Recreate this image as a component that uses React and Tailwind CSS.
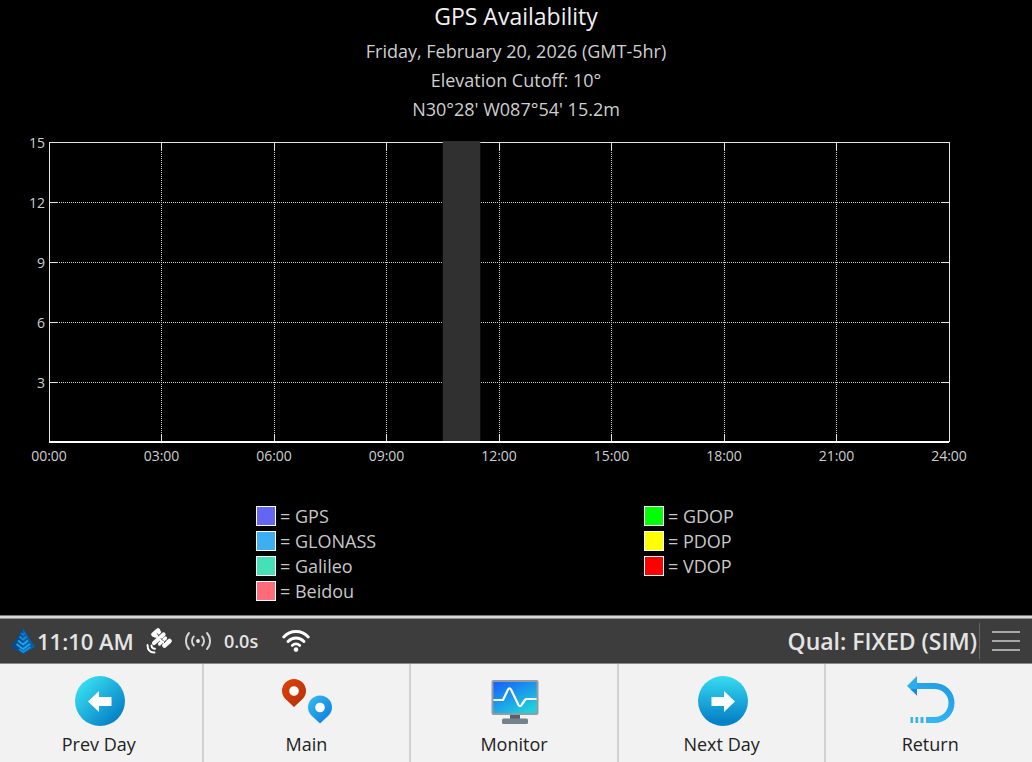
import React, { useState } from 'react';

const DAY_HOURS = 24;
const PLOT_HEIGHT = 300;
const MAX_COUNT = 15;

const HOURS = [0, 3, 6, 9, 12, 15, 18, 21, 24];
const COUNTS = [15, 12, 9, 6, 3];

const CONSTELLATIONS = [
    { label: 'GPS', color: 'bg-[#6366f1]' },
    { label: 'GLONASS', color: 'bg-[#3daeef]' },
    { label: 'Galileo', color: 'bg-[#45e0b5]' },
    { label: 'Beidou', color: 'bg-[#ff6b78]' }
];

const DOPS = [
    { label: 'GDOP', color: 'bg-[#00ff00]' },
    { label: 'PDOP', color: 'bg-[#ffff00]' },
    { label: 'VDOP', color: 'bg-[#ff0000]' }
];

const hourX = (hour) => `${(hour / DAY_HOURS) * 100}%`;
const countY = (count) => PLOT_HEIGHT - (count / MAX_COUNT) * PLOT_HEIGHT;
const hourLabel = (hour) => `${String(hour).padStart(2, '0')}:00`;

const AvailabilityChart = ({ currentHour }) => (
    <svg className="block w-full h-[300px] overflow-visible" role="img" aria-label="GPS Availability">
        {/* Dotted grid */}
        <g stroke="#d4d4d4" strokeWidth="1" strokeDasharray="1 1" shapeRendering="crispEdges">
            {HOURS.slice(1, -1).map((h) => (
                <line key={h} x1={hourX(h)} x2={hourX(h)} y1="0" y2={PLOT_HEIGHT} />
            ))}
            {COUNTS.slice(1).map((c) => (
                <line key={c} x1="0" x2="100%" y1={countY(c)} y2={countY(c)} />
            ))}
        </g>

        {/* Frame */}
        <g stroke="#e5e5e5" strokeWidth="1" shapeRendering="crispEdges">
            <line x1="0" x2="100%" y1="0" y2="0" />
            <line x1="0" x2="0" y1="0" y2={PLOT_HEIGHT} />
            <line x1="100%" x2="100%" y1="0" y2={PLOT_HEIGHT} />
            {HOURS.slice(1, -1).map((h) => (
                <g key={h}>
                    <line x1={hourX(h)} x2={hourX(h)} y1="0" y2="8" />
                    <line x1={hourX(h)} x2={hourX(h)} y1={PLOT_HEIGHT - 8} y2={PLOT_HEIGHT} />
                </g>
            ))}
            {COUNTS.slice(1).map((c) => (
                <g key={c}>
                    <line x1="0" x2="8" y1={countY(c)} y2={countY(c)} />
                    <svg x="100%" className="overflow-visible">
                        <line x1="-8" x2="0" y1={countY(c)} y2={countY(c)} />
                    </svg>
                </g>
            ))}
        </g>

        {/* Current hour */}
        <rect x={hourX(currentHour - 0.5)} width={hourX(1)} y="-1" height={PLOT_HEIGHT} fill="#303030" />
        <line x1="0" x2="100%" y1={PLOT_HEIGHT} y2={PLOT_HEIGHT} stroke="#fff" strokeWidth="2" />

        <g fill="#cfcfcf" fontSize="14">
            {COUNTS.map((c) => (
                <text key={c} x="-4" y={countY(c) + 6} textAnchor="end">{c}</text>
            ))}
            {HOURS.map((h) => (
                <text key={h} x={hourX(h)} y={PLOT_HEIGHT + 19} textAnchor="middle">{hourLabel(h)}</text>
            ))}
        </g>
    </svg>
);

const Legend = ({ items }) => (
    <ul className="w-[132px]">
        {items.map(({ label, color }) => (
            <li key={label} className="flex items-center gap-1 h-[25px] text-lg text-[#c8c8c8] whitespace-nowrap">
                <span className={`w-5 h-5 border border-white ${color}`} />
                <span>= {label}</span>
            </li>
        ))}
    </ul>
);

const LogoIcon = () => (
    <svg className="w-6 h-[26px]" viewBox="0 0 24 26">
        <path d="M12 0 24 19 12 26 0 19Z" fill="#0a4a8c" />
        <path d="M12 0 24 19 12 26Z" fill="#0a5da6" />
        <g fill="none" stroke="#14a8ee" strokeWidth="1.900">
            <path d="m10 5 2 1.800 2-1.800" stroke="#0c7cc4" />
            <path d="m8.500 8.500 3.500 3 3.500-3" stroke="#0f90da" />
            <path d="m7 12.500 5 4 5-4" />
            <path d="m5.500 16 6.500 5 7-5" />
            <path d="m8 21 4 3 7.500-5" stroke="#0f90da" />
        </g>
    </svg>
);

const SatelliteIcon = () => (
    <svg className="w-[26px] h-[26px]" viewBox="0 0 26 26" fill="none" stroke="#fff" strokeLinecap="round">
        <path d="m7.500 6.500 4.500-4" strokeWidth="4.500" />
        <path d="m9 8.500 5-4.500" strokeWidth="2.500" />
        <path d="M8 15 17.500 6.500" strokeWidth="4.200" />
        <path d="m13.500 16 6-6" strokeWidth="3.200" />
        <path d="m10 8 9 8" strokeWidth="2" />
        <path d="m18.500 17.500 5-4.500" strokeWidth="4.500" />
        <path d="m15 10.500 2.500 2.500" stroke="#3d3d3d" strokeWidth="0.900" />
        <path d="m12.800 7.200-1.800-1.700M19.500 13.500l-1.500 1.500" stroke="#3d3d3d" strokeWidth="0.900" />
        <path d="M5.500 17.500c0 2.200 1 3.200 3.500 3.200M1.500 17c0 4.800 2.500 7.500 7 7.500" strokeWidth="1.900" />
    </svg>
);

const AntennaIcon = () => (
    <svg className="w-7 h-5" viewBox="0 0 28 20" fill="none" stroke="#d6d6d6" strokeWidth="1.900" strokeLinecap="round">
        <circle cx="14" cy="10" r="1.900" fill="#eee" stroke="none" />
        <path d="M9.800 5.500a6.500 6.500 0 0 0 0 9M18.200 5.500a6.500 6.500 0 0 1 0 9" />
        <path d="M5 2a12 12 0 0 0 0 16M23 2a12 12 0 0 1 0 16" />
    </svg>
);

const WifiIcon = () => (
    <svg className="w-7 h-[22px]" viewBox="0 0 28 22" fill="none" stroke="#fff" strokeWidth="3" strokeLinecap="round">
        <path d="M1.800 7C8.500-.3 19.500-.3 26.200 7" />
        <path d="M6 11.500c4.500-4.700 11.500-4.700 16 0" />
        <path d="M10.200 15.500c2.200-2.200 5.400-2.200 7.600 0" strokeWidth="2.600" />
        <circle cx="14" cy="19.600" r="2.300" fill="#fff" stroke="none" />
    </svg>
);

const PrevIcon = () => (
    <svg className="w-[50px] h-[50px]" viewBox="0 0 50 50">
        <defs>
            <linearGradient id="prev" x1="0" y1="0.100" x2="0.900" y2="1">
                <stop offset="0.100" stopColor="#36dcf0" />
                <stop offset="0.900" stopColor="#0680c6" />
            </linearGradient>
        </defs>
        <circle cx="25" cy="25" r="25" fill="url(#prev)" />
        <path d="M13 25.500 24 15v6h12.500v9H24v6Z" fill="#fff" />
    </svg>
);

const NextIcon = () => (
    <svg className="w-[50px] h-[50px]" viewBox="0 0 50 50">
        <defs>
            <linearGradient id="next" x1="0" y1="0" x2="0" y2="1">
                <stop offset="0" stopColor="#36dcf0" />
                <stop offset="0.900" stopColor="#0682c8" />
            </linearGradient>
        </defs>
        <circle cx="25" cy="25" r="25" fill="url(#next)" />
        <path d="M37 25.500 26 15v6H13.500v9H26v6Z" fill="#fff" />
    </svg>
);

const PinsIcon = () => (
    <svg className="w-[50px] h-[50px]" viewBox="0 0 50 50">
        <defs>
            <linearGradient id="pin" x1="0" y1="0" x2="1" y2="1">
                <stop offset="0" stopColor="#39bdf2" />
                <stop offset="1" stopColor="#0a78dc" />
            </linearGradient>
            <linearGradient id="redPin" x1="0" y1="0" x2="1" y2="1">
                <stop offset="0" stopColor="#e04208" />
                <stop offset="1" stopColor="#b2300c" />
            </linearGradient>
        </defs>
        <circle cx="12" cy="15" r="6" fill="#fff" />
        <circle cx="38" cy="31.500" r="6" fill="#fff" />
        <path fillRule="evenodd" d="M12 3A12 12 0 0 0 0 15c0 4 2 7 5 9.500L12 31l7-6.500c3-2.500 5-5.500 5-9.500A12 12 0 0 0 12 3Zm0 7.200a4.800 4.800 0 1 1 0 9.600 4.800 4.800 0 0 1 0-9.600Z" fill="url(#redPin)" />
        <path fillRule="evenodd" d="M38 19.500a12 12 0 0 0-12 12c0 4 2 7 5 9.500l7 6.500 7-6.500c3-2.500 5-5.500 5-9.500a12 12 0 0 0-12-12Zm0 7.200a4.800 4.800 0 1 1 0 9.600 4.800 4.800 0 0 1 0-9.600Z" fill="url(#pin)" />
    </svg>
);

const MonitorIcon = () => (
    <svg className="w-[50px] h-[50px]" viewBox="0 0 50 50">
        <defs>
            <linearGradient id="screen" x1="0" y1="0" x2="0.700" y2="1">
                <stop offset="0" stopColor="#1660fb" />
                <stop offset="1" stopColor="#20cfdc" />
            </linearGradient>
        </defs>
        <path d="M20 38h10v6H20Z" fill="#56616a" />
        <rect x="12" y="42.500" width="26" height="5.500" rx="1.500" fill="#75828c" />
        <rect x="1.500" y="4" width="47" height="35" rx="2" fill="#939ca3" />
        <rect x="3.500" y="6" width="43" height="31" fill="url(#screen)" />
        <path d="M3.500 24H13l5-10.500q1.500-2.500 3 0l7.500 15.500q1.500 2.500 3 0l3.500-5q.7-1 2-1h9.500" fill="none" stroke="#fff" strokeWidth="2.200" strokeLinejoin="round" />
    </svg>
);

const ReturnIcon = () => (
    <svg className="w-[50px] h-[50px]" viewBox="0 0 50 50">
        <defs>
            <linearGradient id="return" x1="0" y1="1" x2="0.600" y2="0">
                <stop offset="0" stopColor="#38bdf8" />
                <stop offset="1" stopColor="#219fe4" />
            </linearGradient>
        </defs>
        <path d="M9 7h19.500a20 20 0 0 1 0 40H20v-6h8.500a14 14 0 0 0 0-28H9Z" fill="url(#return)" />
        <path d="M1 10 11 0v19.500Z" fill="#2aafee" />
        <path d="M4.500 41H7v6H4.500ZM9.500 41h2.700v6H9.500ZM14.500 41h3v6h-3Z" fill="#34b4f0" />
        <path d="M4.500 13H11v6.500Z" fill="#148bdc" />
    </svg>
);

const ToolButton = ({ label, icon, onClick }) => (
    <button
        type="button"
        onClick={onClick}
        className="flex flex-col items-center gap-1 pt-3 pb-[5px] border-r-2 last:border-r-0 border-[#d2d2d2] text-lg text-[#222222] hover:bg-white"
    >
        <span className="pl-[2px]">{icon}</span>
        <span>{label}</span>
    </button>
);

const App = () => {
    const [date, setDate] = useState(new Date(2026, 1, 20));

    const shiftDay = (days) => {
        setDate((d) => new Date(d.getFullYear(), d.getMonth(), d.getDate() + days));
    };

    const dateText = date.toLocaleDateString('en-US', {
        weekday: 'long',
        month: 'long',
        day: 'numeric',
        year: 'numeric'
    });

    return (
        <div className="min-h-screen flex flex-col overflow-hidden bg-black font-['Open_Sans','Noto_Sans',sans-serif]">
            <main className="flex-1">
                {/* Heading */}
                <header className="text-center text-lg leading-[29px] text-[#cfcfcf]">
                    <h1 className="pb-[5px] text-[23px] leading-8 text-[#f0f0f0]">GPS Availability</h1>
                    <p>{dateText} (GMT-5hr)</p>
                    <p>Elevation Cutoff: 10°</p>
                    <p>N30°28' W087°54' 15.2m</p>
                </header>

                <section className="pt-[18px] pl-[49px] pr-[83px]">
                    <AvailabilityChart currentHour={11} />
                </section>

                <section className="max-w-[520px] mx-auto pt-[61px] pb-3 flex justify-between">
                    <Legend items={CONSTELLATIONS} />
                    <Legend items={DOPS} />
                </section>
            </main>

            {/* Status bar */}
            <div className="border-t border-[#777777]">
                <div className="border-t-2 border-[#d8d8d8]">
                    <div className="h-[46px] flex items-center border-t border-b border-t-[#8f8f8f] border-b-[#8a8a8a] bg-[#3d3d3d] pl-[11px] pr-3 text-[#e4e4e4]">
                        <LogoIcon />
                        <span className="ml-[2px] text-[22px] font-semibold">11:10 AM</span>
                        <div className="ml-3 flex items-center">
                            <SatelliteIcon />
                            <span className="ml-3"><AntennaIcon /></span>
                            <span className="ml-3 text-lg font-semibold">0.0s</span>
                            <span className="ml-6"><WifiIcon /></span>
                        </div>
                        <span className="ml-auto text-[23px] font-semibold">Qual: FIXED (SIM)</span>
                        <button type="button" aria-label="Menu" className="ml-[2px] h-9 pl-3 flex flex-col justify-center gap-[7px] border-l border-[#666666]">
                            <span className="w-7 h-[2px] bg-[#a8a8a8]" />
                            <span className="w-7 h-[2px] bg-[#a8a8a8]" />
                            <span className="w-7 h-[2px] bg-[#a8a8a8]" />
                        </button>
                    </div>
                </div>
            </div>

            {/* Toolbar */}
            <nav className="grid grid-cols-5 -ml-1 -mr-[2px] bg-[#f2f2f2]">
                <ToolButton label="Prev Day" icon={<PrevIcon />} onClick={() => shiftDay(-1)} />
                <ToolButton label="Main" icon={<PinsIcon />} />
                <ToolButton label="Monitor" icon={<MonitorIcon />} />
                <ToolButton label="Next Day" icon={<NextIcon />} onClick={() => shiftDay(1)} />
                <ToolButton label="Return" icon={<ReturnIcon />} />
            </nav>
        </div>
    );
};

export default App;
